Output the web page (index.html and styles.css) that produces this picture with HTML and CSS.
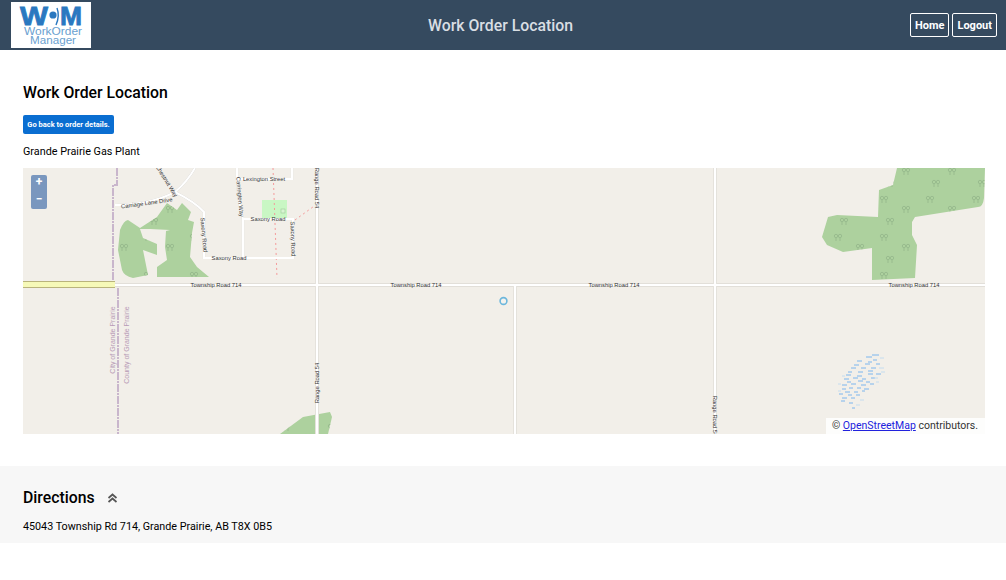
FILE: index.html
```html
<!DOCTYPE html>
<html lang="en">
<head>
    <meta charset="UTF-8">
    <meta name="viewport" content="width=device-width, initial-scale=1.0">
    <title>Work Order Location</title>
    <link rel="stylesheet" href="styles.css">
</head>
<body>
    <!-- Top bar -->
    <header class="topbar">
        <div class="logo">
            <svg width="80" height="46" viewBox="0 0 80 46">
                <text class="logo-mark" x="9" y="23" textLength="28" lengthAdjust="spacingAndGlyphs">W</text>
                <circle cx="42" cy="13" r="3.6" fill="#2a78c0"/>
                <path d="M46 6 Q49 14 45 23" fill="none" stroke="#2a78c0" stroke-width="1.4"/>
                <text class="logo-mark" x="49" y="23" textLength="22" lengthAdjust="spacingAndGlyphs">M</text>
                <text class="logo-line" x="42" y="32.5" textLength="58" lengthAdjust="spacingAndGlyphs">WorkOrder</text>
                <text class="logo-line" x="42" y="41.5" textLength="46" lengthAdjust="spacingAndGlyphs">Manager</text>
            </svg>
        </div>
        <div class="topbar-title">Work Order Location</div>
        <div class="topbar-actions">
            <button class="outline-btn">Home</button>
            <button class="outline-btn">Logout</button>
        </div>
    </header>

    <main class="content">
        <h2 class="page-title">Work Order Location</h2>
        <button class="back-btn">Go back to order details.</button>
        <p class="site-name">Grande Prairie Gas Plant</p>

        <!-- Map -->
        <div class="map">
            <svg class="map-canvas" width="962" height="266" viewBox="23 168 962 266">
                <defs>
                    <pattern id="trees" width="46" height="38" patternUnits="userSpaceOnUse">
                        <g fill="none" stroke="#8fb186" stroke-width="0.7">
                            <circle cx="8" cy="8" r="1.7"/><circle cx="12" cy="8" r="1.7"/>
                            <path d="M8 10v3M12 10v3"/>
                            <circle cx="30" cy="18" r="1.7"/><circle cx="34" cy="18" r="1.7"/>
                            <path d="M30 20v3M34 20v3"/>
                            <circle cx="14" cy="30" r="1.7"/><circle cx="18" cy="30" r="1.7"/>
                            <path d="M14 32v3M18 32v3"/>
                        </g>
                    </pattern>
                </defs>
                <rect x="23" y="168" width="962" height="266" fill="#f2efe9"/>

                <!-- Woods -->
                <g class="wood">
                    <path id="woodA" d="M120 230Q124 220 128 220L140 228L157 217L167 203L177 210L182 203L191 212L188 220L194 222L192 233L190 257L197 267L209 277L157 277L157 267L167 260L165 247L166 231L170 230L150 229L140 229L143 238L157 244L157 255L143 250L148 275L133 278Q124 276 122 270L118 250Z"/>
                    <path id="woodB" d="M897 168L985 168L984 198Q983 207 978 207L915 217L912 222L912 235L917 245L915 278L872 280L872 248L843 252L827 245L822 237L828 217L837 215L878 217L879 190L893 185Z"/>
                    <path id="woodC" d="M280 434L303 417L330 412L332 417L328 434Z"/>
                </g>
                <g fill="url(#trees)">
                    <use href="#woodA"/><use href="#woodB"/><use href="#woodC"/>
                </g>

                <!-- Residential block -->
                <rect x="262" y="200" width="25" height="18" fill="#c9f7c4"/>
                <rect x="281" y="209" width="4" height="4" fill="#d8f5d2" stroke="#9fc99a" stroke-width="0.6"/>

                <!-- Power line and boundaries -->
                <g class="power">
                    <path d="M273 168L277 278"/>
                    <path d="M295 220L317 204"/>
                </g>
                <g class="boundary">
                    <path d="M117 168V185H113V282"/>
                    <path d="M118 288V434"/>
                </g>

                <!-- Roads, casing first -->
                <g class="road-casing">
                    <path d="M115 285H985M317 168V434M515 285V434M715 168V434"/>
                </g>
                <g class="road">
                    <path d="M115 285H985M317 168V434M515 285V434M715 168V434"/>
                </g>
                <g class="road-small">
                    <path d="M237 168V179H292V168"/>
                    <path d="M237 179Q238 200 243 219V258"/>
                    <path d="M243 219H293V258H204V212Q195 202 175 192"/>
                    <path d="M195 168Q187 182 175 192Q150 205 115 205"/>
                </g>
                <path class="trunk" d="M23 284.5H115"/>
                <path class="trunk-fill" d="M23 284.5H115"/>

                <!-- Pond -->
                <path class="pond" d="M872 355h7M866 357h6M873 360h4M857 361h5M868 362h4M854 365h5M865 364h5M876 364h4M851 368h5M861 368h5M871 368h5M848 372h4M858 372h5M868 371h5M846 375h5M857 376h5M868 374h5M876 374h5M844 379h5M853 378h5M862 379h4M871 378h4M847 382h4M858 381h5M866 382h4M842 385h5M851 384h5M861 385h5M870 384h4M842 389h4M849 388h4M857 388h4M864 389h5M845 392h5M854 392h4M862 391h3M839 394h4M848 395h4M856 395h4M842 398h5M851 398h4M841 401h4M849 403h4M852 408h3"/>
                <path class="pond-faint" d="M880 358h4M879 368h5M881 372h4M842 376h3M838 384h3M838 391h3M860 400h4M856 405h4M874 378h4M876 382h3"/>

                <!-- Marker -->
                <circle class="marker" cx="503.5" cy="301" r="3.4"/>

                <!-- Labels -->
                <g class="road-label">
                    <text x="216" y="287">Township Road 714</text>
                    <text x="416" y="287">Township Road 714</text>
                    <text x="614" y="287">Township Road 714</text>
                    <text x="914" y="287">Township Road 714</text>
                    <text x="264" y="181">Lexington Street</text>
                    <text x="268" y="221">Saxony Road</text>
                    <text x="229" y="260">Saxony Road</text>
                    <text transform="translate(147 205) rotate(-8)">Carriage Lane Drive</text>
                    <text transform="translate(165 182) rotate(58)">Chestnut Way</text>
                    <text transform="translate(202 235) rotate(85)">Saxony Road</text>
                    <text transform="translate(291 239) rotate(88)">Saxony Road</text>
                    <text transform="translate(238 197) rotate(85)">Carrington Way</text>
                    <text transform="translate(315 188) rotate(90)">Range Road 54</text>
                    <text transform="translate(319 383) rotate(-90)">Range Road 54</text>
                    <text transform="translate(713 416) rotate(90)">Range Road 54</text>
                </g>
                <g class="boundary-label">
                    <text transform="translate(114.5 340) rotate(-90)">City of Grande Prairie</text>
                    <text transform="translate(128.5 345) rotate(-90)">County of Grande Prairie</text>
                </g>
            </svg>

            <div class="zoom-control">
                <span class="zoom-btn">+</span>
                <span class="zoom-btn">&minus;</span>
            </div>
            <div class="attribution">&copy; <a href="#">OpenStreetMap</a> contributors.</div>
        </div>
    </main>

    <!-- Directions panel -->
    <section class="directions">
        <div class="directions-head">
            <h2 class="page-title">Directions</h2>
            <svg width="11" height="10" viewBox="0 0 11 10">
                <path d="M1.5 5L5.5 1.5L9.5 5M1.5 9L5.5 5.5L9.5 9" fill="none" stroke="#555" stroke-width="1.7"/>
            </svg>
        </div>
        <p class="address">45043 Township Rd 714, Grande Prairie, AB T8X 0B5</p>
    </section>
</body>
</html>
```

FILE: styles.css
```css
/* General styling */
body {
    font-family: Roboto, 'Liberation Sans', sans-serif;
    margin: 0;
    background-color: #fff;
    color: #000;
}

/* Top bar */
.topbar {
    display: flex;
    align-items: center;
    justify-content: space-between;
    height: 50px;
    padding: 0 9px 0 11px;
    background-color: #354a5f;
    box-sizing: border-box;
}

.logo {
    width: 80px;
    height: 46px;
    background-color: #fff;
    line-height: 0;
}

.logo-mark {
    font-family: 'Liberation Sans', sans-serif;
    font-weight: bold;
    font-size: 25px;
    fill: #2a78c0;
    stroke: #2a78c0;
    stroke-width: 0.8;
}

.logo-line {
    font-family: 'Liberation Sans', sans-serif;
    font-size: 10.5px;
    fill: #6a9fd0;
    text-anchor: middle;
}

.topbar-title {
    color: #d9dee3;
    font-size: 15.8px;
    font-weight: 500;
}

.topbar-actions {
    display: flex;
    gap: 3px;
}

.outline-btn {
    height: 24px;
    padding: 0 4px;
    background: none;
    border: 1px solid #fff;
    border-radius: 2px;
    color: #fff;
    font-family: inherit;
    font-size: 11px;
    font-weight: 700;
}

/* Main content */
.content {
    padding: 33px 21px 32px 23px;
}

.page-title {
    margin: 0;
    font-size: 15.8px;
    font-weight: 500;
    line-height: 20px;
}

.back-btn {
    display: block;
    height: 19px;
    width: 91px;
    margin-top: 12px;
    padding: 0;
    background-color: #0a6ed1;
    border: none;
    border-radius: 2px;
    color: #fff;
    font-family: inherit;
    font-size: 7.5px;
    font-weight: 700;
    white-space: nowrap;
}

.site-name {
    margin: 10px 0 9px;
    font-size: 10.8px;
    line-height: 15px;
}

/* Map */
.map {
    position: relative;
    height: 266px;
    overflow: hidden;
}

.map-canvas {
    display: block;
}

.wood {
    fill: #add19e;
}

.road-casing path {
    fill: none;
    stroke: #e2dfd9;
    stroke-width: 4;
}

.road path {
    fill: none;
    stroke: #fff;
    stroke-width: 2.2;
}

.road-small path {
    fill: none;
    stroke: #fff;
    stroke-width: 2.2;
}

.road-small {
    filter: drop-shadow(0 0 0.5px #bbb);
}

.trunk {
    fill: none;
    stroke: #b9b47c;
    stroke-width: 7;
}

.trunk-fill {
    fill: none;
    stroke: #f6f9b8;
    stroke-width: 5;
}

.power path {
    fill: none;
    stroke: #f59a9a;
    stroke-width: 1;
    stroke-dasharray: 2 3;
}

.boundary path {
    fill: none;
    stroke: #c9b6cc;
    stroke-width: 2;
    stroke-dasharray: 8 1 2 1;
}

.pond {
    fill: none;
    stroke: #7db6ee;
    stroke-width: 1;
}

.pond-faint {
    fill: none;
    stroke: #c4dcef;
    stroke-width: 1;
}

.marker {
    fill: rgba(255, 255, 255, 0.2);
    stroke: #6db7dc;
    stroke-width: 1.6;
}

.road-label text {
    font-family: 'Liberation Sans', sans-serif;
    font-size: 5.8px;
    fill: #333;
    text-anchor: middle;
}

.boundary-label text {
    font-family: 'Liberation Sans', sans-serif;
    font-size: 7px;
    fill: #b79ab6;
    text-anchor: middle;
}

.zoom-control {
    position: absolute;
    top: 7px;
    left: 8px;
    display: flex;
    flex-direction: column;
    width: 16px;
    height: 34px;
    background-color: #7a97be;
    border-radius: 2px;
}

.zoom-btn {
    height: 17px;
    color: #fff;
    font-size: 12px;
    font-weight: 700;
    line-height: 15px;
    text-align: center;
}

.attribution {
    position: absolute;
    right: 0;
    bottom: 0;
    height: 16px;
    padding: 0 7px 0 6px;
    background-color: rgba(255, 255, 255, 0.85);
    color: #333;
    font-size: 10.5px;
    line-height: 16px;
}

.attribution a {
    color: #2222dd;
}

/* Directions */
.directions {
    height: 77px;
    padding: 22px 23px 0;
    background-color: #f7f7f7;
    box-sizing: border-box;
}

.directions-head {
    display: flex;
    align-items: center;
    gap: 12px;
}

.address {
    margin: 11px 0 0;
    font-size: 10.75px;
    line-height: 15px;
}
```
